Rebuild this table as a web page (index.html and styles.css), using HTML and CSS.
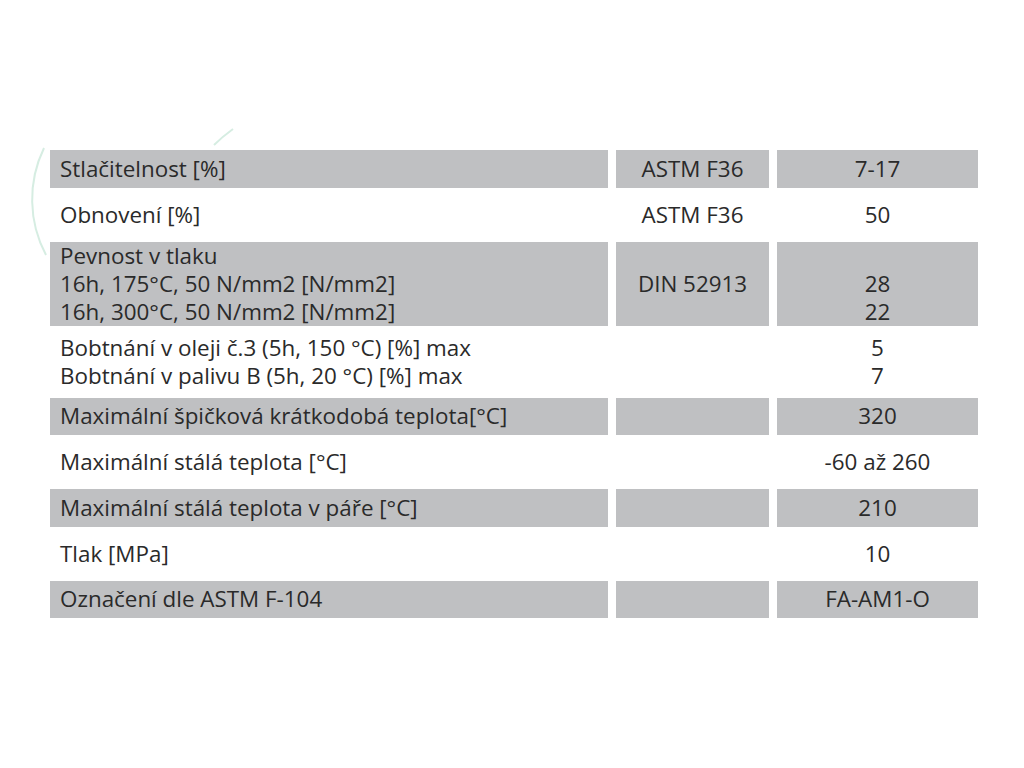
FILE: index.html
```html
<!DOCTYPE html>
<html lang="cs">
<head>
<meta charset="utf-8">
<title>Vlastnosti</title>
<link rel="stylesheet" href="styles.css">
</head>
<body>
<div class="page">
  <svg class="deco" width="260" height="280" viewBox="0 0 260 280">
    <path d="M 44 148 A 118 118 0 0 0 46 255" fill="none" stroke="#d6ede2" stroke-width="2"/>
    <path d="M 214 145 Q 222 137 233 129" fill="none" stroke="#d6ede2" stroke-width="2"/>
  </svg>
  <div class="table">
    <div class="cell g">Stlačitelnost [%]</div>
    <div class="cell g c">ASTM F36</div>
    <div class="cell g c">7-17</div>

    <div class="cell">Obnovení [%]</div>
    <div class="cell c">ASTM F36</div>
    <div class="cell c">50</div>

    <div class="cell g">Pevnost v tlaku<br>16h, 175°C, 50 N/mm2 [N/mm2]<br>16h, 300°C, 50 N/mm2 [N/mm2]</div>
    <div class="cell g c">DIN 52913</div>
    <div class="cell g c"><br>28<br>22</div>

    <div class="cell">Bobtnání v oleji č.3 (5h, 150 °C) [%] max<br>Bobtnání v palivu B (5h, 20 °C) [%] max</div>
    <div class="cell c"></div>
    <div class="cell c">5<br>7</div>

    <div class="cell g">Maximální špičková krátkodobá teplota[°C]</div>
    <div class="cell g c"></div>
    <div class="cell g c">320</div>

    <div class="cell">Maximální stálá teplota [°C]</div>
    <div class="cell c"></div>
    <div class="cell c">-60 až 260</div>

    <div class="cell g">Maximální stálá teplota v páře [°C]</div>
    <div class="cell g c"></div>
    <div class="cell g c">210</div>

    <div class="cell">Tlak [MPa]</div>
    <div class="cell c"></div>
    <div class="cell c">10</div>

    <div class="cell g">Označení dle ASTM F-104</div>
    <div class="cell g c"></div>
    <div class="cell g c">FA-AM1-O</div>
  </div>
</div>
</body>
</html>
```
FILE: styles.css
```css
html, body {
  margin: 0;
  padding: 0;
  background: #ffffff;
}
.page {
  position: relative;
  width: 1024px;
  height: 768px;
  padding-top: 150px;
  padding-left: 50px;
  box-sizing: border-box;
}
.deco {
  position: absolute;
  left: 0;
  top: 0;
}
.table {
  position: relative;
  display: grid;
  grid-template-columns: 558px 153px 201px;
  column-gap: 8px;
  row-gap: 8px;
  width: 928px;
  font-family: "Open Sans", "Noto Sans", sans-serif;
  font-size: 22.4px;
  line-height: 28px;
  color: #2a2a2a;
}
.cell {
  min-height: 37.75px;
  padding: 0 10px;
  box-sizing: border-box;
  display: flex;
  flex-direction: column;
  justify-content: center;
}
.c {
  text-align: center;
  align-items: center;
}
.g {
  background: #bfc0c2;
}
```
